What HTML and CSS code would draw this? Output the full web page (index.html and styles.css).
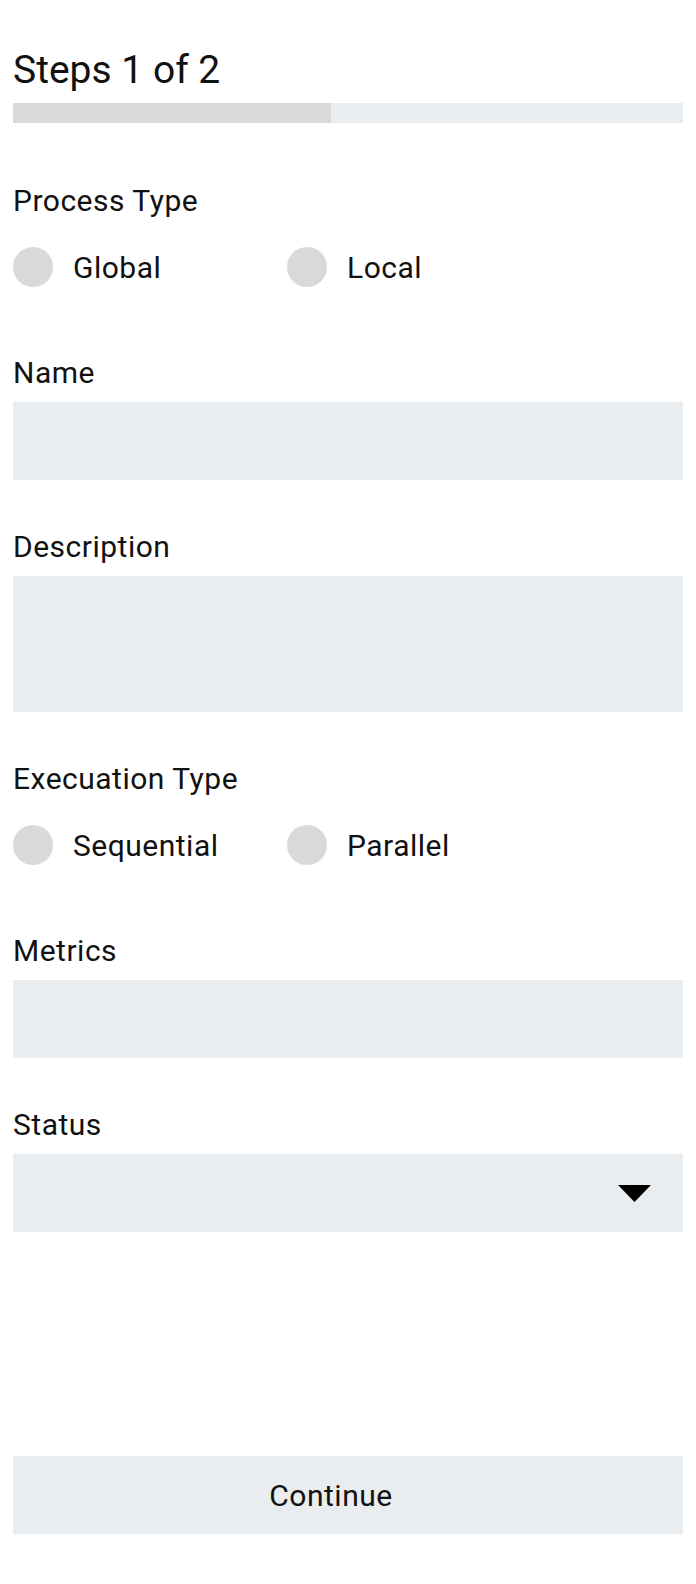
FILE: index.html
```html
<!DOCTYPE html>
<html lang="en">
<head>
<meta charset="utf-8">
<title>Steps</title>
<link rel="stylesheet" href="styles.css">
</head>
<body>
<main class="page">
  <h1 class="title">Steps 1 of 2</h1>
  <div class="progress"><div class="progress-fill" style="width: 47.5%"></div></div>

  <section class="field field-first">
    <div class="label">Process Type</div>
    <div class="radios">
      <label class="radio"><span class="dot"></span><span class="radio-text">Global</span></label>
      <label class="radio"><span class="dot"></span><span class="radio-text">Local</span></label>
    </div>
  </section>

  <section class="field field-after-radio">
    <div class="label">Name</div>
    <div class="input"></div>
  </section>

  <section class="field">
    <div class="label">Description</div>
    <div class="input textarea"></div>
  </section>

  <section class="field">
    <div class="label">Execuation Type</div>
    <div class="radios">
      <label class="radio"><span class="dot"></span><span class="radio-text">Sequential</span></label>
      <label class="radio"><span class="dot"></span><span class="radio-text">Parallel</span></label>
    </div>
  </section>

  <section class="field field-after-radio">
    <div class="label">Metrics</div>
    <div class="input"></div>
  </section>

  <section class="field">
    <div class="label">Status</div>
    <div class="input select">
      <svg class="caret" width="33" height="17" viewBox="0 0 33 17"><polygon points="0,0 33,0 16.5,17" fill="#000"/></svg>
    </div>
  </section>

  <button class="continue">Continue</button>
</main>
</body>
</html>
```

FILE: styles.css
```css
html, body {
  margin: 0;
  padding: 0;
  background: #ffffff;
}

.page {
  font-family: Roboto, "Noto Sans", "Liberation Sans", sans-serif;
  color: #111111;
  padding: 0 13px;
  display: flex;
  flex-direction: column;
}

.title {
  margin: 47px 0 0 0;
  font-size: 39px;
  font-weight: 400;
  line-height: 46px;
  height: 46px;
}

.progress {
  margin-top: 10px;
  height: 20px;
  background: #eaedf0;
}

.progress-fill {
  height: 100%;
  background: #d9d9d9;
}

.field {
  display: flex;
  flex-direction: column;
  margin-top: 49px;
}

.field-first {
  margin-top: 60px;
}

.field-after-radio {
  margin-top: 68px;
}

.label {
  font-size: 30px;
  line-height: 36px;
  height: 36px;
  letter-spacing: 0.5px;
}

.radios {
  display: grid;
  grid-template-columns: 274px 274px;
  margin-top: 28px;
}

.radio {
  display: flex;
  align-items: center;
  gap: 20px;
  height: 40px;
  font-size: 30px;
  letter-spacing: 0.5px;
}

.dot {
  width: 40px;
  height: 40px;
  border-radius: 50%;
  background: #d9d9d9;
  flex: none;
}

.input {
  margin-top: 11px;
  height: 78px;
  background: #eaedf0;
}

.textarea {
  height: 136px;
}

.select {
  display: flex;
  align-items: center;
  justify-content: flex-end;
  padding-right: 32px;
}

.caret {
  display: block;
}

.continue {
  margin-top: 224px;
  height: 78px;
  border: none;
  background: #eaedf0;
  font-family: Roboto, "Noto Sans", "Liberation Sans", sans-serif;
  font-size: 30px;
  letter-spacing: 0.5px;
  color: #111111;
  padding: 0 34px 0 0;
}
```
